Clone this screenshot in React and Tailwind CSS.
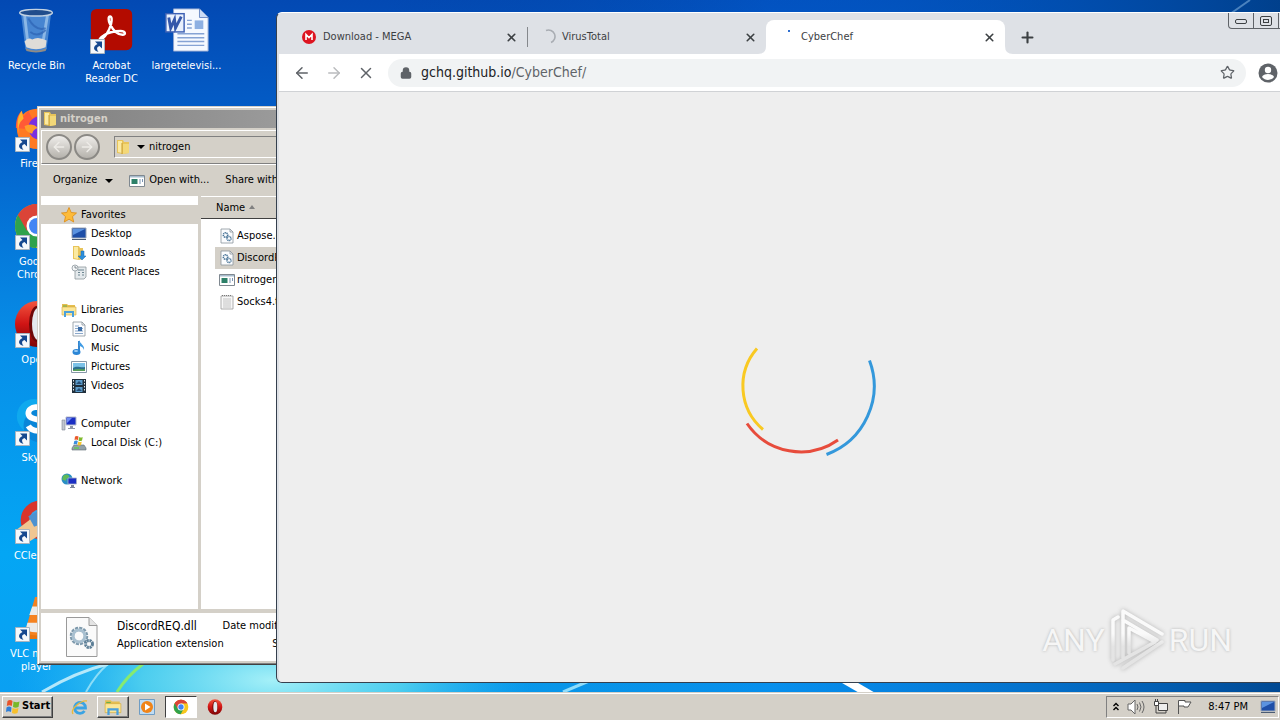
import { ArrowLeft, ArrowRight, Lock, Plus, Star, X } from 'lucide-react'

function ChromeLogo({ className }) {
  return (
    <svg viewBox="0 0 48 48" className={className} aria-hidden="true">
      <circle cx="24" cy="24" r="22" fill="#f7c71e" />
      <path d="M24 24 5 13A22 22 0 0 1 43 13H24z" fill="#db4437" />
      <path d="M5 13A22 22 0 0 0 23 46l9-17-8-5z" fill="#2fa24c" />
      <path d="M24 13h19a22 22 0 0 0-38 0l9 16z" fill="#db4437" />
      <circle cx="24" cy="24" r="10.500" fill="#fff" />
      <circle cx="24" cy="24" r="8" fill="#4285f4" />
    </svg>
  )
}

function OperaLogo({ className }) {
  return (
    <svg viewBox="0 0 48 48" className={className} aria-hidden="true">
      <defs>
        <linearGradient id="opera" x1="0" y1="0" x2="0" y2="1">
          <stop offset="0" stopColor="#f2553f" />
          <stop offset="0.5" stopColor="#d01414" />
          <stop offset="1" stopColor="#7d0505" />
        </linearGradient>
      </defs>
      <ellipse cx="24" cy="24" rx="22" ry="23" fill="url(#opera)" />
      <ellipse cx="24" cy="24" rx="8" ry="18" fill="#6d0808" />
      <ellipse cx="25" cy="24" rx="6" ry="16" fill="#e4e9ee" />
    </svg>
  )
}

function Folder({ className }) {
  return (
    <svg viewBox="0 0 16 16" className={className} aria-hidden="true">
      <path d="M2 1h6l1 2h5v11l-6 1-6-1z" fill="#e8c45a" />
      <path d="M3 2h4v12l-4-1z" fill="#fbeaa2" />
      <path d="M8 5h6v9l-6 1z" fill="#f3d878" />
      <path d="M7 4v11" stroke="#c79d33" />
    </svg>
  )
}

function Library({ className }) {
  return (
    <svg viewBox="0 0 16 16" className={className} aria-hidden="true">
      {smallIcons.libraries}
    </svg>
  )
}

function Sheet({ children }) {
  return (
    <>
      <path d="M2 1h9l3 3v11H2z" fill="#fbfcfe" stroke="#8b949d" strokeWidth="0.800" />
      <path d="M11 1v3h3" fill="none" stroke="#8b949d" strokeWidth="0.800" />
      {children}
    </>
  )
}

function Screen() {
  return (
    <>
      <path d="M1 2h14v10H1z" fill="#1e4fa8" stroke="#9aa7b8" />
      <path d="M2 3h12L2 9z" fill="#5b93e0" />
      <path d="M1 13h14v1H1z" fill="#4b5c74" />
    </>
  )
}

function Monitor() {
  return (
    <>
      <path d="M5 1h10v8H5z" fill="#1b2fc4" stroke="#b5bccb" />
      <path d="M6 2h5l-5 5z" fill="#6f8cf5" />
      <path d="M9 10h3v2h2v1H7v-1h2z" fill="#8f97a8" />
    </>
  )
}

const smallIcons = {
  star: (
    <path d="m8 .5 2.200 5 5.300.5-4 3.600 1.200 5.400L8 12.200 3.300 15l1.200-5.400-4-3.600 5.300-.500z" fill="#fdbb3a" stroke="#dd8a12" strokeWidth="0.800" />
  ),
  desktop: <Screen />,
  downloads: (
    <>
      <path d="M2 1h6l1 2h3v11l-4 1-6-1z" fill="#e8c45a" />
      <path d="M3 2h4v12l-4-1z" fill="#fbeaa2" />
      <path d="M10 6h3v5h2l-4 4-4-4h3z" fill="#2c8fdc" stroke="#186bb0" strokeWidth="0.500" />
    </>
  ),
  recent: (
    <>
      <path d="M4 3h11v10l-2 2H4z" fill="#e4e9ec" stroke="#8d979d" strokeWidth="0.800" />
      <path d="M7 6h6M7 8.500h2m2 0h2M7 11h2m2 0h2" stroke="#6c8590" />
      <circle cx="4" cy="4" r="3" fill="#f4f6f7" stroke="#8d979d" strokeWidth="0.800" />
      <path d="M4 2v2h2" fill="none" stroke="#55636b" strokeWidth="0.700" />
    </>
  ),
  documents: (
    <Sheet>
      <path d="M4 5h4M4 7.500h8M4 10h8M4 12.500h8" stroke="#7e9ec4" strokeWidth="0.900" />
      <path d="M7 6h4v4H7z" fill="#3c6ea8" />
    </Sheet>
  ),
  music: (
    <>
      <path d="M8 1v10" stroke="#2278c8" strokeWidth="1.800" />
      <path d="M8 0c1 4 6 5 5 10-1-3-3-4-5-4z" fill="#3f9be4" />
      <ellipse cx="5.500" cy="12" rx="4" ry="3" fill="#2b86d6" />
      <ellipse cx="5" cy="11" rx="2" ry="1" fill="#9fd0f7" />
    </>
  ),
  pictures: (
    <>
      <path d="M.5 2.500h15v11H.5z" fill="#fff" stroke="#8798a8" />
      <path d="M2 4h12v8H2z" fill="#7cc2e8" />
      <path d="M2 9c4-3 7 0 12-1v4H2z" fill="#2c6f8e" />
      <path d="M2 11c4-2 8 0 12-1v2H2z" fill="#58a05c" />
    </>
  ),
  videos: (
    <>
      <path d="M1 1h14v14H1z" fill="#20303d" />
      <path d="M4.500 2h7v5h-7zM4.500 9h7v5h-7z" fill="#5c9ccb" />
      <path d="M2.500 2v12M13.500 2v12" stroke="#dfe8ee" strokeDasharray="1.500 1.500" />
      <path d="M5 6l3-3 3 3zM5 13l3-3 3 3z" fill="#284f75" />
    </>
  ),
  libraries: (
    <>
      <path d="M1 2h5l1 1h7v3H1z" fill="#e5be4f" />
      <path d="M1 5h14v8H1z" fill="#fbe696" stroke="#d3aa3c" strokeWidth="0.600" />
      <path d="M4 15v-5h8v5" fill="none" stroke="#4aa0dc" strokeWidth="2" />
      <path d="M2 4h4" stroke="#6ab04c" />
    </>
  ),
  computer: (
    <>
      <path d="M1 4h3v10H1z" fill="#c2c6cf" stroke="#7f8796" strokeWidth="0.600" />
      <Monitor />
    </>
  ),
  disk: (
    <>
      <path d="M3 10h10l2 3v2H1v-2z" fill="#93a2a9" stroke="#5e6d73" strokeWidth="0.600" />
      <path d="M3 13h5" stroke="#55d04a" strokeWidth="1.200" />
      <path d="M4 1.500q2-1 3.500 0L7 5q-2-1-3.500 0z" fill="#ea5a2a" />
      <path d="M8.300 2q2 1 3.500 0L11 5.500q-2 1-3.500 0z" fill="#7fba2c" />
      <path d="M3.300 6q2-1 3.500 0L6 9.500q-2-1-3.500 0z" fill="#3d8fe0" />
      <path d="M7.300 6.500q2 1 3.500 0L10 10q-2 1-3.500 0z" fill="#f8c52c" />
    </>
  ),
  network: (
    <>
      <circle cx="6" cy="6" r="5.500" fill="#2a8fc4" />
      <path d="M2 3c2-2 5-2 6 0s-3 2-3 4-3-1-4 0z" fill="#5fba5a" />
      <path d="M7 5h8.500v6H7z" fill="#1b2fc4" stroke="#aab3c6" strokeWidth="0.800" />
      <path d="M10 12h3v2h1v1H9v-1h1z" fill="#7d879b" />
    </>
  ),
  dll: (
    <Sheet>
      <circle cx="6.500" cy="7" r="2.200" fill="none" stroke="#4b7699" strokeWidth="1.600" strokeDasharray="1.200 0.500" />
      <circle cx="10" cy="10.500" r="2" fill="none" stroke="#4b7699" strokeWidth="1.500" strokeDasharray="1.100 0.500" />
    </Sheet>
  ),
  app: (
    <>
      <path d="M.5 2.500h15v11H.5z" fill="#fff" stroke="#7f8890" />
      <path d="M1 3h14v1.500H1z" fill="#a8bccd" />
      <path d="M2.500 6h6v5h-6z" fill="#2d8068" />
      <path d="M10.500 6h1v5h-1zM13 6h1v3h-1z" fill="#7b95b5" />
    </>
  ),
  text: (
    <>
      <path d="M2 2h12v13H2z" fill="#f8f8f8" stroke="#999" strokeWidth="0.800" />
      <path d="M4 5h8M4 7h8M4 9h8M4 11h8M4 13h8" stroke="#b5b5b5" strokeWidth="0.800" />
      <path d="M3 1.500h10" stroke="#777" strokeDasharray="1 1" />
    </>
  ),
}

function SmallIcon({ name }) {
  return (
    <svg viewBox="0 0 16 16" className="size-4 shrink-0" aria-hidden="true">
      {smallIcons[name]}
    </svg>
  )
}

function Shortcut() {
  return (
    <svg viewBox="0 0 15 15" className="absolute bottom-0 left-0.5 size-[15px]" aria-hidden="true">
      <path d="M.5.5h14v14H.5z" fill="#f5f8fb" stroke="#a9b4bf" />
      <path d="M5 2.500h7v7l-2.500-2.500c-3 1-3 3-1 6C3 11.500 2.500 7.500 7.500 5z" fill="#15488f" />
    </svg>
  )
}

const bigIcons = {
  bin: (
    <>
      <path d="M8 4h32l-5 40q-11 5-22 0z" fill="#5f98da" fillOpacity="0.750" />
      <path d="M12 8l4 34M36 8l-5 30" stroke="#b9d8f4" strokeWidth="3" strokeOpacity="0.600" />
      <path d="M16 12q8 14 18 10M18 26q8 6 16-2" fill="none" stroke="#2c62b4" strokeWidth="2" strokeOpacity="0.700" />
      <path d="M12 36q4-5 8-2 6-4 15 1l-1 7q-10 4-20 0z" fill="#dfdcd8" />
      <ellipse cx="24" cy="6" rx="17" ry="3.500" fill="#214d8c" stroke="#c3d2e2" strokeWidth="1.500" />
      <path d="M13 43q11 5 22 0l-1 3q-10 3-20 0z" fill="#8f8b86" />
    </>
  ),
  acrobat: (
    <>
      <rect x="3" y="2" width="43" height="43" rx="6" fill="#b30b00" />
      <path
        d="M13 34c4-1 9-9 11-16 1-4 1-8-1-8s-2 4 0 8c3 6 8 11 13 11 4 0 3-4-2-4-7 0-14 2-18 5-3 2-5 4-3 4z"
        fill="none"
        stroke="#fff"
        strokeWidth="2.500"
      />
    </>
  ),
  word: (
    <>
      <path d="M11 2h27l9 9v35H11z" fill="#f5f9ff" stroke="#8ea4d0" />
      <path d="M38 2v9h9" fill="#ccdcf5" stroke="#6d8bc4" />
      <path d="M33 14h9v9h-9z" fill="#8eb0e2" />
      <path d="M25 14h5M25 18h5M25 22h5M15 28h28M15 32h28M15 36h28M15 40h28" stroke="#86a3d4" strokeWidth="1.500" />
      <rect x="3" y="7" width="19" height="19" fill="#e9f0fc" stroke="#3d61b4" strokeWidth="1.500" />
      <path d="M6 11l2 11 4-9 1 9 6-12" fill="none" stroke="#3457aa" strokeWidth="3" />
    </>
  ),
  firefox: (
    <>
      <circle cx="25" cy="25" r="21" fill="#ff7a22" />
      <path d="M3 24C3 14 6 9 9 6l2 6 5-6 4 8 9-6c9 4 17 10 17 20z" fill="#ff5a36" />
      <path d="M9 6l2 8q-7 6-5 16-4-14 3-24z" fill="#ffb52e" />
      <circle cx="28" cy="24" r="12" fill="#7a2fe0" />
      <path d="M12 22q8-4 14 2-5 1-6 6-7-1-8-8z" fill="#ff9d2a" />
    </>
  ),
  skype: (
    <>
      <circle cx="22" cy="18" r="18" fill="#0fa9ee" />
      <circle cx="28" cy="28" r="17" fill="#0a86d8" />
      <path d="M34 12c-4-5-18-5-18 3 0 9 18 4 18 12 0 8-14 8-18 1" fill="none" stroke="#fff" strokeWidth="6" />
    </>
  ),
  ccleaner: (
    <>
      <circle cx="28" cy="24" r="20" fill="#d8352b" />
      <circle cx="28" cy="24" r="11" fill="#3ea3e8" />
      <path d="M4 34l16-12 10 16-12 8z" fill="#f0c691" />
      <path d="M16 20l10-5 6 12-10 4z" fill="#4d92d0" />
    </>
  ),
  vlc: (
    <>
      <path d="M10 36h34l3 10H7z" fill="#e97510" />
      <path d="M23 2h8l11 38q-15 5-30 0z" fill="#f58220" />
      <path d="M20 12h14l3 9H17zM15 29h24l2 8q-14 4-28 0z" fill="#ecebea" />
    </>
  ),
}

const desktopItems = [
  { label: 'Recycle Bin', icon: 'bin' },
  { label: 'Firefox', icon: 'firefox', shortcut: true },
  { label: 'Google Chrome', icon: 'chrome', shortcut: true },
  { label: 'Opera', icon: 'opera', shortcut: true },
  { label: 'Skype', icon: 'skype', shortcut: true },
  { label: 'CCleaner', icon: 'ccleaner', shortcut: true },
  { label: 'VLC media player', icon: 'vlc', shortcut: true },
  { label: 'Acrobat Reader DC', icon: 'acrobat', shortcut: true },
  { label: 'largetelevisi...', icon: 'word' },
]

function BigIcon({ name }) {
  if (name === 'chrome') return <ChromeLogo className="size-12" />
  if (name === 'opera') return <OperaLogo className="size-12" />
  return (
    <svg viewBox="0 0 50 48" className="size-12" aria-hidden="true">
      {bigIcons[name]}
    </svg>
  )
}

function DesktopItem({ item }) {
  return (
    <button className="flex h-[98px] w-[73px] flex-col items-center pt-1.5 text-center text-[11px] leading-[13px] text-white">
      <span className="relative mb-[5px] block size-12">
        <BigIcon name={item.icon} />
        {item.shortcut && <Shortcut />}
      </span>
      <span className="w-[72px]">{item.label}</span>
    </button>
  )
}

function Wallpaper() {
  return (
    <svg className="absolute inset-0 size-full" viewBox="0 0 1280 692" preserveAspectRatio="none" aria-hidden="true">
      <defs>
        <linearGradient id="sky" x1="0" y1="0" x2="0" y2="1">
          <stop offset="0" stopColor="#0349b3" />
          <stop offset="0.2" stopColor="#0361cb" />
          <stop offset="0.5" stopColor="#078fe8" />
          <stop offset="0.8" stopColor="#04a6f4" />
          <stop offset="1" stopColor="#0aa0f2" />
        </linearGradient>
        <linearGradient id="shade" x1="0" y1="0" x2="1" y2="0">
          <stop offset="0.3" stopColor="#003f88" stopOpacity="0" />
          <stop offset="0.6" stopColor="#0068e0" stopOpacity="0.300" />
          <stop offset="1" stopColor="#003f88" stopOpacity="0.900" />
        </linearGradient>
        <radialGradient id="glow">
          <stop offset="0" stopColor="#a5f0f8" />
          <stop offset="0.5" stopColor="#5cd8ee" stopOpacity="0.800" />
          <stop offset="1" stopColor="#27b5f0" stopOpacity="0" />
        </radialGradient>
      </defs>
      <path d="M0 0h1280v692H0z" fill="url(#sky)" />
      <path d="M0 0h1280v692H0z" fill="url(#shade)" />
      <ellipse cx="272" cy="680" rx="260" ry="90" fill="url(#glow)" />
      <path d="M42 692q34-20 66-28" fill="none" stroke="#d9f6fd" strokeWidth="3" strokeOpacity="0.800" />
      <path d="M86 692q10-18 22-28" fill="none" stroke="#b6eefa" strokeWidth="2" strokeOpacity="0.700" />
      <path d="M117 692q10-16 26-28" fill="none" stroke="#86ea70" strokeWidth="3" />
      <path d="M563 692l38-16" stroke="#8fdcfa" strokeWidth="3" />
      <path d="M876 698L838 676" fill="none" stroke="#fff" strokeWidth="8" />
      <path d="M1230 14l20-14" stroke="#4a82be" strokeWidth="2" />
    </svg>
  )
}

const places = [
  { label: 'Favorites', icon: 'star', items: [['Desktop', 'desktop'], ['Downloads', 'downloads'], ['Recent Places', 'recent']] },
  { label: 'Libraries', icon: 'libraries', items: [['Documents', 'documents'], ['Music', 'music'], ['Pictures', 'pictures'], ['Videos', 'videos']] },
  { label: 'Computer', icon: 'computer', items: [['Local Disk (C:)', 'disk']] },
  { label: 'Network', icon: 'network', items: [] },
]

const files = [
  { name: 'Aspose.dll', icon: 'dll' },
  { name: 'DiscordREQ.dll', icon: 'dll', selected: true },
  { name: 'nitrogen.exe', icon: 'app' },
  { name: 'Socks4.txt', icon: 'text' },
]

function RoundButton({ label, children }) {
  return (
    <button
      aria-label={label}
      className="flex size-[26px] items-center justify-center rounded-full border-2 border-[#8b8985] bg-linear-to-b from-[#efedea] to-[#b5b2ac] text-[#eeece8]"
    >
      {children}
    </button>
  )
}

function Caret() {
  return (
    <svg viewBox="0 0 8 4" className="h-1 w-2" aria-hidden="true">
      <path d="M0 0h8L4 4z" fill="#000" />
    </svg>
  )
}

function Place({ label, icon, className }) {
  return (
    <button className={`flex h-[19px] w-full items-center gap-1 ${className}`}>
      <SmallIcon name={icon} />
      <span className="pt-0.5">{label}</span>
    </button>
  )
}

function Explorer() {
  return (
    <section className="absolute top-[106px] bottom-[27px] left-[37px] flex w-[480px] flex-col border border-t-[#d4d0c8] border-r-[#404040] border-b-[#404040] border-l-[#d4d0c8] bg-[#d4d0c8] p-[3px] text-[11px] text-black shadow-[inset_1px_1px_0_#fff,inset_-1px_-1px_0_#808080]">
      <header className="flex h-[18px] shrink-0 items-center gap-0.5 bg-linear-to-r from-[#808080] to-[#b5b5b5] pl-px">
        <Folder className="size-4" />
        <h2 className="pt-px text-[11px] font-bold text-[#d4d0c8]">nitrogen</h2>
      </header>

      <div className="mt-0.5 flex h-[34px] shrink-0 items-center gap-0.5 border border-t-white border-r-white border-b-[#808080] border-l-white pl-1">
        <RoundButton label="Back">
          <ArrowLeft size={16} />
        </RoundButton>
        <RoundButton label="Forward">
          <ArrowRight size={16} />
        </RoundButton>
        <div className="ml-3 flex h-[22px] flex-1 items-center border border-t-[#808080] border-r-white border-b-white border-l-[#808080]">
          <Folder className="size-4" />
          <button aria-label="Recent locations" className="pr-1 pl-1.5">
            <Caret />
          </button>
          <span>nitrogen</span>
        </div>
      </div>

      <div className="flex h-8 shrink-0 items-center border-t border-white px-3">
        <button className="flex items-center gap-2">
          Organize <Caret />
        </button>
        <button className="ml-4 flex items-center gap-1">
          <SmallIcon name="app" /> Open with...
        </button>
        <button className="ml-4">Share with</button>
      </div>

      <div className="flex min-h-0 flex-1">
        <nav className="flex w-[157px] shrink-0 flex-col gap-[19px] bg-white pt-[9px]">
          {places.map((group, i) => (
            <ul key={group.label}>
              <li className={i === 0 ? 'bg-[#d4d0c8]' : ''}>
                <Place label={group.label} icon={group.icon} className="pl-5" />
              </li>
              {group.items.map(([label, icon]) => (
                <li key={label}>
                  <Place label={label} icon={icon} className="pl-[30px]" />
                </li>
              ))}
            </ul>
          ))}
        </nav>
        <div className="ml-[3px] flex-1 bg-white">
          <table className="w-full border-collapse text-left">
            <thead>
              <tr>
                <th className="h-[22px] border-t border-b border-t-white border-b-[#404040] bg-[#d4d0c8] p-0 pt-0.5 pl-[15px] font-normal">
                  <span className="flex items-center gap-1">
                    Name
                    <svg viewBox="0 0 6 4" className="mb-1 h-1 w-1.5" aria-hidden="true">
                      <path d="M0 4h6L3 0z" fill="#808080" />
                    </svg>
                  </span>
                </th>
              </tr>
            </thead>
            <tbody className="before:block before:h-1.5">
              {files.map(file => (
                <tr key={file.name}>
                  <td className="p-0 pl-3.5">
                    <div className={`flex h-[22px] items-center gap-0.5 pl-1 ${file.selected ? 'bg-[#d4d0c8]' : ''}`}>
                      <SmallIcon name={file.icon} />
                      <span className="pt-px">{file.name}</span>
                    </div>
                  </td>
                </tr>
              ))}
            </tbody>
          </table>
        </div>
      </div>

      <footer className="mt-1 flex h-12 shrink-0 items-start bg-white pt-1">
        <svg viewBox="0 0 32 40" className="ml-[25px] h-10 w-8 shrink-0" aria-hidden="true">
          <path d="M.5.5H23l8 8V39.500H.5z" fill="#fafafa" stroke="#9a9a9a" />
          <path d="M23 .5v8h8" fill="#e4e4e4" stroke="#9a9a9a" />
          <circle cx="13" cy="19" r="7" fill="none" stroke="#7d98ab" strokeWidth="4.500" strokeDasharray="2.700 0.960" />
          <circle cx="13" cy="19" r="6" fill="none" stroke="#a9c0d0" strokeWidth="3" />
          <circle cx="23" cy="27" r="3.500" fill="none" stroke="#5d7f97" strokeWidth="3" strokeDasharray="2.100 0.650" />
        </svg>
        <div className="ml-[19px] w-[105px]">
          <p className="text-[12px] leading-[18px]">DiscordREQ.dll</p>
          <p className="leading-[18px] whitespace-nowrap">Application extension</p>
        </div>
        <div className="w-[74px] text-right leading-[18px] whitespace-nowrap">
          <p>Date modified:</p>
          <p>Size:</p>
        </div>
      </footer>
    </section>
  )
}

function MegaIcon() {
  return (
    <svg viewBox="0 0 14 14" className="size-3.5" aria-hidden="true">
      <circle cx="7" cy="7" r="7" fill="#dd1420" />
      <path d="M4 10V4.500l3 3 3-3V10" fill="none" stroke="#fff" strokeWidth="1.600" />
    </svg>
  )
}

function SpinnerIcon() {
  return (
    <svg viewBox="0 0 16 16" className="size-4" aria-hidden="true">
      <path d="M6 1.500A6.500 6.500 0 0 1 11 13.500" fill="none" stroke="#a9adb3" strokeWidth="1.600" />
    </svg>
  )
}

function DotIcon() {
  return (
    <svg viewBox="0 0 16 16" className="size-4" aria-hidden="true">
      <path d="M9 1h2v2H9z" fill="#2f6fd0" />
    </svg>
  )
}

const tabs = [
  { title: 'Download - MEGA', icon: <MegaIcon /> },
  { title: 'VirusTotal', icon: <SpinnerIcon />, divider: true },
  { title: 'CyberChef', icon: <DotIcon />, active: true },
]

function Tab({ tab }) {
  return (
    <div
      className={`relative flex h-[34px] w-[239px] items-center text-[11px] text-[#3c4043] ${tab.active ? 'rounded-t-lg bg-white' : ''}`}
    >
      {tab.divider && <span className="absolute left-0 h-5 w-px bg-[#85888c]" />}
      {tab.active && (
        <svg viewBox="0 0 255 8" className="absolute bottom-0 -left-2 h-2 w-[255px]" aria-hidden="true">
          <path d="M0 8q8 0 8-8h1v8zM255 8q-8 0-8-8h-1v8z" fill="#fff" />
        </svg>
      )}
      <button className="flex h-full flex-1 items-center gap-1.5 pl-[13px] text-left">
        <span className="flex w-4 justify-center">{tab.icon}</span>
        {tab.title}
      </button>
      <button aria-label={`Close ${tab.title}`} className="mr-2 p-px text-[#3c4043]">
        <X size={13} strokeWidth={3} />
      </button>
    </div>
  )
}

function WindowButtons() {
  return (
    <div className="absolute top-0 right-[3px] flex h-4 divide-x divide-[#5f6368] rounded-b border border-t-0 border-[#5f6368]">
      <button aria-label="Minimize" className="flex w-[25px] items-end justify-center pb-1">
        <span className="h-[5px] w-3 rounded-xs border border-[#3c4043]" />
      </button>
      <button aria-label="Restore" className="flex w-[25px] items-center justify-center">
        <span className="flex h-2.5 w-3 items-center justify-center rounded-xs border border-[#3c4043]">
          <span className="h-1 w-1.5 border border-[#3c4043]" />
        </span>
      </button>
      <button aria-label="Close" className="flex w-10 items-center justify-center">
        <X size={12} />
      </button>
    </div>
  )
}

function Browser() {
  return (
    <section className="absolute top-3 -right-11 bottom-[9px] left-[276px] flex flex-col overflow-hidden rounded-md border border-t-white border-r-[#35404e] border-b-[#35404e] border-l-[#35404e] bg-[#dee1e6]">
      <header className="relative flex h-[41px] shrink-0 items-end pl-[11px]">
        {tabs.map(tab => (
          <Tab key={tab.title} tab={tab} />
        ))}
        <button aria-label="New tab" className="mb-2 ml-3.5 text-[#3c4043]">
          <Plus size={17} strokeWidth={3} />
        </button>
        <WindowButtons />
      </header>

      <div className="ml-0.5 flex h-[38px] shrink-0 items-center border-b border-[#d0d2d5] bg-white pl-3.5 text-[#5f6368]">
        <button aria-label="Back">
          <ArrowLeft size={18} strokeWidth={2} />
        </button>
        <button aria-label="Forward" className="ml-3.5 text-[#babcbe]">
          <ArrowRight size={18} strokeWidth={2} />
        </button>
        <button aria-label="Stop" className="ml-3.5">
          <X size={18} strokeWidth={2} />
        </button>
        <div className="ml-[13px] flex h-7 flex-1 items-center rounded-full bg-[#f1f3f4] pr-[11px] pl-3">
          <Lock size={12} strokeWidth={3} fill="currentColor" />
          <a href="#address" className="ml-[9px] flex-1 text-[14px] text-[#5f6368]">
            <span className="text-[#202124]">gchq.github.io</span>/CyberChef/
          </a>
          <button aria-label="Bookmark this tab">
            <Star size={15} strokeWidth={2} />
          </button>
        </div>
        <button aria-label="Profile" className="mr-[45px] ml-3">
          <svg viewBox="0 0 20 20" className="size-5">
            <circle cx="10" cy="10" r="9.500" fill="#5f6368" />
            <circle cx="10" cy="7" r="3.200" fill="#fff" />
            <path d="M4 14c1-4 11-4 12 0-3 4-9 4-12 0z" fill="#fff" />
          </svg>
        </button>
      </div>

      <main className="ml-0.5 flex flex-1 items-center justify-center bg-[#eee]">
        <svg viewBox="-75 -74 150 150" className="size-[150px]" role="img" aria-label="Loading">
          <g fill="none" strokeWidth="3">
            <path d="M68.500-25.500A73 73 0 0 1 25.500 68.500" stroke="#3498db" />
            <path d="M-54 37.500A65 65 0 0 0 37 54" stroke="#e74c3c" />
            <path d="M-44-37.500A57 57 0 0 0-38 43.500" stroke="#f9c922" />
          </g>
        </svg>
      </main>
    </section>
  )
}

function Watermark() {
  return (
    <div className="pointer-events-none absolute right-12 bottom-5 flex items-center gap-1 font-[Roboto] text-[32px] leading-none text-[#f6f6f6] [text-shadow:0_0_3px_#b4b4b4]">
      <span>ANY</span>
      <svg viewBox="0 0 56 64" className="h-16 w-14 drop-shadow-[0_0_2px_#b4b4b4]" aria-hidden="true">
        <defs>
          <linearGradient id="play" x1="0" y1="0" x2="0" y2="64" gradientUnits="userSpaceOnUse">
            <stop offset="0.4" stopColor="#fafafa" />
            <stop offset="0.6" stopColor="#e4e4e4" />
          </linearGradient>
        </defs>
        <path d="M9 9 4 12v40M14 50V3l39 23M14 12l34 20M53 34 14 60M20 45V20l26 14-40 22" fill="none" stroke="url(#play)" strokeWidth="3.500" strokeLinecap="round" strokeLinejoin="round" />
      </svg>
      <span>RUN</span>
    </div>
  )
}

function Taskbar() {
  return (
    <footer className="relative flex h-7 shrink-0 items-center border-t border-[#d4d0c8] bg-[#d4d0c8] pr-px pl-0.5 text-[11px] text-black shadow-[inset_0_1px_0_#fff]">
      <button className="flex h-[22px] items-center gap-px border border-t-white border-r-[#404040] border-b-[#404040] border-l-white px-0.5 text-[11px] font-bold shadow-[inset_-1px_-1px_0_#808080]">
        <svg viewBox="0 0 16 16" className="size-4" aria-hidden="true">
          <path d="M2.500 2q2.500-2 5 0L6.800 7q-2.500-1.500-5 0z" fill="#e8542a" />
          <path d="M8.500 2.500q3 1.500 6 0L13.500 8q-3 1.500-5.500 0z" fill="#78b82a" />
          <path d="M1.500 8.500q2.500-2 5 0L6 13q-2.500-1.500-5 0z" fill="#2f7fd8" />
          <path d="M7.500 9q3 1.500 6 0l-1 5q-3 1.500-5.500 0z" fill="#f7c02c" />
        </svg>
        Start
      </button>
      <button aria-label="Internet Explorer" className="ml-[18px]">
        <svg viewBox="0 0 18 18" className="size-[18px]" aria-hidden="true">
          <path d="M4 10h10.500A5.500 5.500 0 1 0 13.500 13" fill="none" stroke="#3aa3e3" strokeWidth="2.800" />
          <path d="M2 16C-1 11 10 2 16 3" fill="none" stroke="#e9b93c" strokeWidth="1.400" />
        </svg>
      </button>
      <button aria-label="Windows Explorer" className="ml-2 flex h-[22px] w-8 items-center justify-center border border-t-white border-r-[#404040] border-b-[#404040] border-l-white shadow-[inset_-1px_-1px_0_#808080]">
        <Library className="size-[18px]" />
      </button>
      <button aria-label="Media Player" className="ml-2.5">
        <svg viewBox="0 0 16 16" className="size-4" aria-hidden="true">
          <path d="M.5.5h15v15H.5z" fill="#bfdcf3" stroke="#6f9dc4" />
          <circle cx="8" cy="8" r="6" fill="#f08418" />
          <path d="M6 4.500v7L11.500 8z" fill="#fff" />
        </svg>
      </button>
      <button aria-label="Google Chrome" className="ml-2.5 flex h-[22px] w-8 items-center justify-center border border-t-[#404040] border-r-white border-b-white border-l-[#404040] bg-white">
        <ChromeLogo className="size-4" />
      </button>
      <button aria-label="Opera" className="ml-2.5">
        <OperaLogo className="size-4" />
      </button>

      <div className="ml-auto flex h-[22px] w-[173px] items-center justify-between border border-t-[#808080] border-r-white border-b-white border-l-[#808080] pr-0.5 pl-1.5">
        <button aria-label="Show hidden icons">
          <svg viewBox="0 0 6 9" className="h-[9px] w-1.5" aria-hidden="true">
            <path d="M.5 4 3 1.500 5.500 4M.5 8 3 5.500 5.500 8" fill="none" stroke="#000" strokeWidth="1.400" />
          </svg>
        </button>
        <svg viewBox="0 0 18 16" className="h-4 w-[18px]" aria-hidden="true">
          <path d="M1 5h3l4-4v14l-4-4H1z" fill="#fff" stroke="#666" />
          <path d="M10 5q2 3 0 6M12.500 3.500q3 4.500 0 9M15 2q4 6 0 12" fill="none" stroke="#666" />
        </svg>
        <svg viewBox="0 0 16 16" className="size-4" aria-hidden="true">
          <path d="M5.500 4.500h9v7h-9z" fill="#eee" stroke="#444" />
          <path d="M3 6v8h10v-2" fill="none" stroke="#444" />
          <path d="M1.500 2.500h4v4h-4zM2.500 0v2M4.500 0v2" fill="#fff" stroke="#444" />
        </svg>
        <svg viewBox="0 0 16 16" className="size-4" aria-hidden="true">
          <path d="M2.500 15V1.500H9V3h6l-3 5H8V7H3" fill="#fff" stroke="#555" />
        </svg>
        <time className="mr-1 ml-2 pt-px">8:47 PM</time>
        <button aria-label="Show desktop">
          <SmallIcon name="desktop" />
        </button>
      </div>
    </footer>
  )
}

export default function App() {
  return (
    <div className="flex h-screen min-h-[480px] flex-col overflow-hidden font-['DejaVu_Sans_Condensed','DejaVu_Sans',sans-serif]">
      <div className="relative flex-1 overflow-hidden">
        <Wallpaper />
        <div className="relative grid w-fit grid-flow-col grid-rows-[repeat(7,98px)] gap-x-0.5">
          {desktopItems.slice(0, 7).map(item => (
            <DesktopItem key={item.label} item={item} />
          ))}
          {desktopItems.slice(7).map(item => (
            <div key={item.label} className="row-span-7">
              <DesktopItem item={item} />
            </div>
          ))}
        </div>
        <Explorer />
        <Browser />
        <Watermark />
      </div>
      <Taskbar />
    </div>
  )
}
